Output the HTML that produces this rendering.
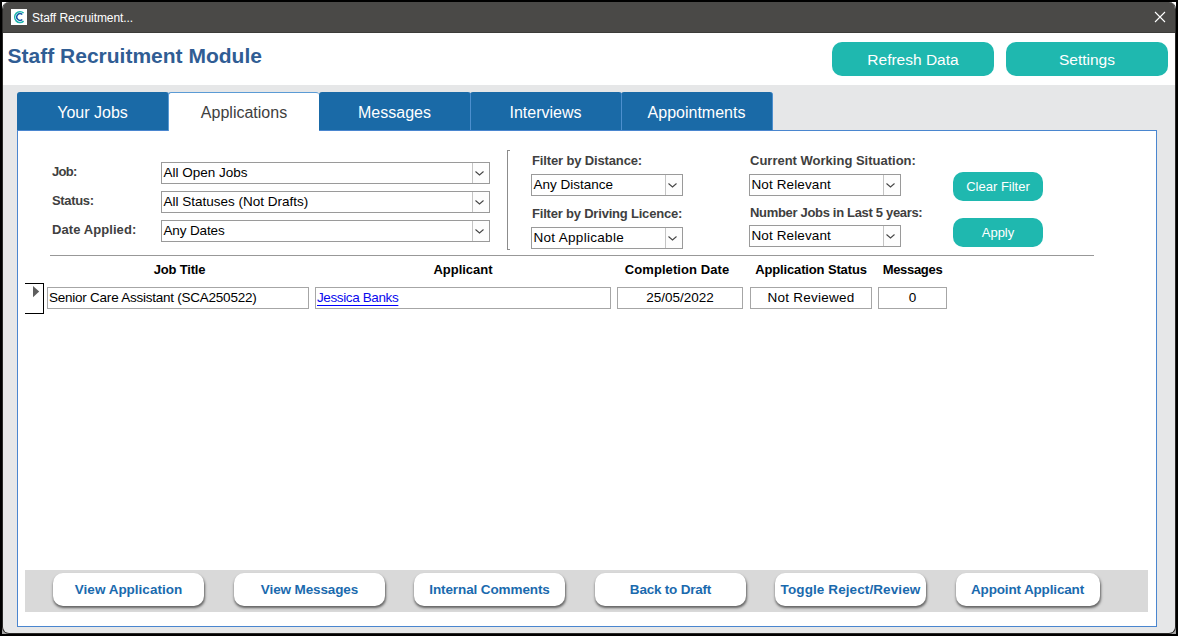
<!DOCTYPE html>
<html lang="en">
<head>
<meta charset="utf-8">
<title>Staff Recruitment Module</title>
<style>
*{box-sizing:border-box;margin:0;padding:0}
html,body{width:1178px;height:636px;overflow:hidden;background:#000}
body{position:relative;font-family:"Liberation Sans",sans-serif;font-size:13px;color:#000}
.abs{position:absolute}
#win{position:absolute;left:2px;top:2px;width:1174px;height:632px;background:#e6e7e8;border-radius:7px;overflow:hidden;border-left:1px solid #2a2928;border-right:1px solid #2a2928;border-bottom:1px solid #2a2928}
#tbar{position:absolute;left:-1px;top:0;width:1174px;height:31px;background:#4a4947;border-bottom:1px solid #3c3b39}
#ticon{position:absolute;left:9px;top:7px;width:16px;height:16px;background:#fff}
#ttext{position:absolute;left:30px;top:8px;font-size:12px;line-height:16px;color:#fff;white-space:nowrap;letter-spacing:-0.07px}
#tclose{position:absolute;left:1152px;top:9px;width:12px;height:12px}
#head{position:absolute;left:0;top:31px;width:1172px;height:52px;background:#fff}
#h1{position:absolute;left:4.6px;top:11px;font-size:21px;line-height:24px;font-weight:bold;color:#305d94;white-space:nowrap}
.tbtn{position:absolute;top:9px;height:34px;width:162px;border-radius:10px;background:#1fb8af;color:#fff;font-size:15.5px;line-height:35px;text-align:center;white-space:nowrap}
.tab{position:absolute;top:90px;height:38px;width:152px;padding-right:0;background:#1a6aa7;color:#fff;font-size:16px;line-height:41px;text-align:center;border-radius:3px 3px 0 0;border-right:1px solid #4d8fce;white-space:nowrap}
.tab.sel{background:#fff;color:#404040;border:1px solid #5b9bd5;border-bottom:none;border-right:none;width:151px;height:39px;line-height:39px;z-index:9}
#panel{position:absolute;left:14px;top:128px;width:1140px;height:497px;background:#fff;border:1px solid #4a86cf}
.lbl{position:absolute;font-weight:bold;color:#404040;font-size:13px;line-height:16px;white-space:nowrap}
.hdr{position:absolute;font-weight:bold;color:#000;font-size:13px;line-height:16px;white-space:nowrap;text-align:center}
.cmb{position:absolute;height:22px;background:#fff;border:1px solid #9a9a9a;font-size:13.5px;line-height:19px;padding-left:1.5px;white-space:nowrap}
.cmb i{position:absolute;right:0;top:0;width:17px;height:20px;border-left:1px solid #c4c4c4;background:#fdfdfd}
.cmb i svg{position:absolute;left:2.4px;top:7.5px}
.txt{position:absolute;top:285px;height:22px;background:#fff;border:1px solid #a6a6a6;font-size:13.5px;line-height:19px;padding-left:1px;white-space:nowrap}
.txt.c{text-align:center;padding-left:0}
.gbtn{position:absolute;left:950px;width:90px;height:29px;border-radius:10px;background:#1fb8af;color:#fff;font-size:13px;line-height:29px;text-align:center;white-space:nowrap}
#strip{position:absolute;left:22px;top:568px;width:1123px;height:42px;background:#d9d9d9}
.bbtn{position:absolute;top:571px;height:33px;width:151px;border-radius:10px;background:#fff;color:#1a6aae;font-weight:bold;font-size:13.5px;line-height:33px;text-align:center;white-space:nowrap;box-shadow:0.5px 2px 2.5px rgba(0,0,0,.55)}
a{color:#0a0aee;text-decoration:underline;text-decoration-color:#0000ff;text-decoration-thickness:1px;text-underline-offset:2.5px}
</style>
</head>
<body>
<div class="abs" style="left:2px;top:2px;width:1174px;height:632px;background:linear-gradient(#fff 0,#fff 50%,#a8a8a8 50%,#a8a8a8 100%)"></div>
<div id="win">
  <div id="tbar">
    <div id="ticon"><svg width="16" height="16" viewBox="0 0 16 16"><path d="M12.64 4.02 A5.4 5.4 0 1 0 12.64 12.18" fill="none" stroke="#1fb6ae" stroke-width="1.6"/><path d="M11.3 5.5 A3.35 3.35 0 1 0 11.3 10.5" fill="none" stroke="#1459a8" stroke-width="1.45"/></svg></div>
    <div id="ttext">Staff Recruitment...</div>
    <svg id="tclose" viewBox="0 0 12 12"><path d="M1 1 L11 11 M11 1 L1 11" stroke="#fff" stroke-width="1.1" fill="none"/></svg>
  </div>
  <div id="head">
    <div id="h1">Staff Recruitment Module</div>
    <div class="tbtn" style="left:829px">Refresh Data</div>
    <div class="tbtn" style="left:1003px">Settings</div>
  </div>

  <div class="tab" style="left:14px;z-index:5">Your Jobs</div>
  <div class="tab sel" style="left:165px">Applications</div>
  <div class="tab" style="left:316px;z-index:4">Messages</div>
  <div class="tab" style="left:467px;z-index:3">Interviews</div>
  <div class="tab" style="left:618px;z-index:2">Appointments</div>

  <div id="panel"></div>

  <div class="lbl" style="left:49px;top:162px;letter-spacing:-0.72px">Job:</div>
  <div class="lbl" style="left:49px;top:191px;letter-spacing:-0.33px">Status:</div>
  <div class="lbl" style="left:49px;top:220px;letter-spacing:0.08px">Date Applied:</div>
  <div class="cmb" style="left:158px;top:160px;width:329px">All Open Jobs<i><svg width="9" height="6" viewBox="0 0 9 6"><path d="M0.5 0.5 L4.5 4 L8.5 0.5" fill="none" stroke="#444" stroke-width="1.05"/></svg></i></div>
  <div class="cmb" style="left:158px;top:189px;width:329px">All Statuses (Not Drafts)<i><svg width="9" height="6" viewBox="0 0 9 6"><path d="M0.5 0.5 L4.5 4 L8.5 0.5" fill="none" stroke="#444" stroke-width="1.05"/></svg></i></div>
  <div class="cmb" style="left:158px;top:218px;width:329px;letter-spacing:-0.13px">Any Dates<i><svg width="9" height="6" viewBox="0 0 9 6"><path d="M0.5 0.5 L4.5 4 L8.5 0.5" fill="none" stroke="#444" stroke-width="1.05"/></svg></i></div>

  <div class="abs" style="left:504px;top:148px;width:1px;height:100px;background:#8c8c8c"></div>
  <div class="abs" style="left:504px;top:148px;width:3px;height:1px;background:#8c8c8c"></div>
  <div class="abs" style="left:504px;top:247px;width:3px;height:1px;background:#8c8c8c"></div>

  <div class="lbl" style="left:529px;top:151px;letter-spacing:-0.14px">Filter by Distance:</div>
  <div class="cmb" style="left:528px;top:172px;width:152px">Any Distance<i><svg width="9" height="6" viewBox="0 0 9 6"><path d="M0.5 0.5 L4.5 4 L8.5 0.5" fill="none" stroke="#444" stroke-width="1.05"/></svg></i></div>
  <div class="lbl" style="left:529px;top:204px;letter-spacing:-0.2px">Filter by Driving Licence:</div>
  <div class="cmb" style="left:528px;top:225px;width:152px;letter-spacing:0.3px">Not Applicable<i><svg width="9" height="6" viewBox="0 0 9 6"><path d="M0.5 0.5 L4.5 4 L8.5 0.5" fill="none" stroke="#444" stroke-width="1.05"/></svg></i></div>

  <div class="lbl" style="left:747px;top:151px">Current Working Situation:</div>
  <div class="cmb" style="left:746px;top:172px;width:152px;letter-spacing:0.12px">Not Relevant<i><svg width="9" height="6" viewBox="0 0 9 6"><path d="M0.5 0.5 L4.5 4 L8.5 0.5" fill="none" stroke="#444" stroke-width="1.05"/></svg></i></div>
  <div class="lbl" style="left:747px;top:203px;letter-spacing:-0.32px">Number Jobs in Last 5 years:</div>
  <div class="cmb" style="left:746px;top:223px;width:152px;letter-spacing:0.12px">Not Relevant<i><svg width="9" height="6" viewBox="0 0 9 6"><path d="M0.5 0.5 L4.5 4 L8.5 0.5" fill="none" stroke="#444" stroke-width="1.05"/></svg></i></div>

  <div class="gbtn" style="top:170px">Clear Filter</div>
  <div class="gbtn" style="top:216px">Apply</div>

  <div class="abs" style="left:47px;top:253px;width:1044px;height:1px;background:#989898"></div>

  <div class="hdr" style="left:45.5px;top:260px;width:262px;letter-spacing:-0.17px">Job Title</div>
  <div class="hdr" style="left:312px;top:260px;width:296px">Applicant</div>
  <div class="hdr" style="left:611px;top:260px;width:126px;letter-spacing:0.08px">Completion Date</div>
  <div class="hdr" style="left:747px;top:260px;width:122px;letter-spacing:-0.14px">Application Status</div>
  <div class="hdr" style="left:875px;top:260px;width:69px;letter-spacing:-0.3px">Messages</div>

  <div class="abs" style="left:22px;top:281px;width:19px;height:31px;border:1px solid #000;border-left:none"></div>
  <svg class="abs" style="left:30px;top:284px" width="7" height="12" viewBox="0 0 7 12"><path d="M0 0 L6.2 5.6 L0 11.2 Z" fill="#5e5e5e"/></svg>

  <div class="txt" style="left:44px;width:262px;letter-spacing:-0.24px">Senior Care Assistant (SCA250522)</div>
  <div class="txt" style="left:312px;width:296px"><a style="letter-spacing:-0.38px">Jessica Banks</a></div>
  <div class="txt c" style="left:614px;width:126px">25/05/2022</div>
  <div class="txt c" style="left:747px;width:122px;letter-spacing:0.26px">Not Reviewed</div>
  <div class="txt c" style="left:875px;width:69px">0</div>

  <div id="strip"></div>
  <div class="bbtn" style="left:50px">View Application</div>
  <div class="bbtn" style="left:231px;letter-spacing:-0.12px">View Messages</div>
  <div class="bbtn" style="left:411px;letter-spacing:-0.11px">Internal Comments</div>
  <div class="bbtn" style="left:592px;letter-spacing:-0.21px">Back to Draft</div>
  <div class="bbtn" style="left:772px;letter-spacing:0.1px">Toggle Reject/Review</div>
  <div class="bbtn" style="left:952.5px;width:144px;letter-spacing:-0.16px">Appoint Applicant</div>
</div>
</body>
</html>
